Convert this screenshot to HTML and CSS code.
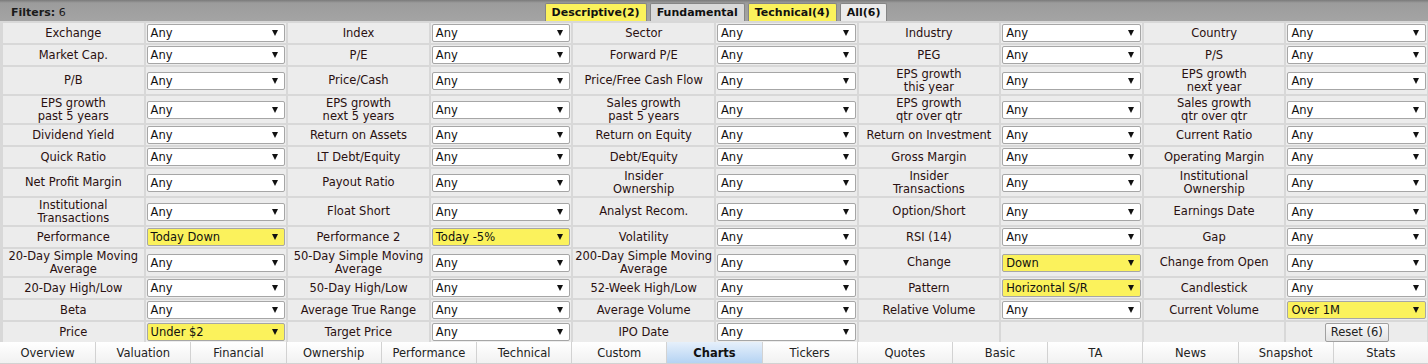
FILE: index.html
```html
<!DOCTYPE html>
<html lang="en">
<head>
    <meta charset="UTF-8">
    <title>Screener Filters</title>
    <link rel="stylesheet" href="styles.css">
</head>
<body>

<div class="panel">
    <div class="head">
        <div class="count"><b>Filters:</b> 6</div>
        <div class="groups">
            <span class="grp on">Descriptive(2)</span>
            <span class="grp">Fundamental</span>
            <span class="grp on">Technical(4)</span>
            <span class="grp cur">All(6)</span>
        </div>
        <div></div>
    </div>

    <div class="filters">
        <!-- row 1 -->
        <div class="lbl">Exchange</div><div class="cell"><div class="sel">Any</div></div>
        <div class="lbl">Index</div><div class="cell"><div class="sel">Any</div></div>
        <div class="lbl">Sector</div><div class="cell"><div class="sel">Any</div></div>
        <div class="lbl">Industry</div><div class="cell"><div class="sel">Any</div></div>
        <div class="lbl">Country</div><div class="cell"><div class="sel">Any</div></div>
        <!-- row 2 -->
        <div class="lbl">Market Cap.</div><div class="cell"><div class="sel">Any</div></div>
        <div class="lbl">P/E</div><div class="cell"><div class="sel">Any</div></div>
        <div class="lbl">Forward P/E</div><div class="cell"><div class="sel">Any</div></div>
        <div class="lbl">PEG</div><div class="cell"><div class="sel">Any</div></div>
        <div class="lbl">P/S</div><div class="cell"><div class="sel">Any</div></div>
        <!-- row 3 -->
        <div class="lbl">P/B</div><div class="cell"><div class="sel">Any</div></div>
        <div class="lbl">Price/Cash</div><div class="cell"><div class="sel">Any</div></div>
        <div class="lbl">Price/Free Cash Flow</div><div class="cell"><div class="sel">Any</div></div>
        <div class="lbl">EPS growth<br>this year</div><div class="cell"><div class="sel">Any</div></div>
        <div class="lbl">EPS growth<br>next year</div><div class="cell"><div class="sel">Any</div></div>
        <!-- row 4 -->
        <div class="lbl">EPS growth<br>past 5 years</div><div class="cell"><div class="sel">Any</div></div>
        <div class="lbl">EPS growth<br>next 5 years</div><div class="cell"><div class="sel">Any</div></div>
        <div class="lbl">Sales growth<br>past 5 years</div><div class="cell"><div class="sel">Any</div></div>
        <div class="lbl">EPS growth<br>qtr over qtr</div><div class="cell"><div class="sel">Any</div></div>
        <div class="lbl">Sales growth<br>qtr over qtr</div><div class="cell"><div class="sel">Any</div></div>
        <!-- row 5 -->
        <div class="lbl">Dividend Yield</div><div class="cell"><div class="sel">Any</div></div>
        <div class="lbl">Return on Assets</div><div class="cell"><div class="sel">Any</div></div>
        <div class="lbl">Return on Equity</div><div class="cell"><div class="sel">Any</div></div>
        <div class="lbl">Return on Investment</div><div class="cell"><div class="sel">Any</div></div>
        <div class="lbl">Current Ratio</div><div class="cell"><div class="sel">Any</div></div>
        <!-- row 6 -->
        <div class="lbl">Quick Ratio</div><div class="cell"><div class="sel">Any</div></div>
        <div class="lbl">LT Debt/Equity</div><div class="cell"><div class="sel">Any</div></div>
        <div class="lbl">Debt/Equity</div><div class="cell"><div class="sel">Any</div></div>
        <div class="lbl">Gross Margin</div><div class="cell"><div class="sel">Any</div></div>
        <div class="lbl">Operating Margin</div><div class="cell"><div class="sel">Any</div></div>
        <!-- row 7 -->
        <div class="lbl">Net Profit Margin</div><div class="cell"><div class="sel">Any</div></div>
        <div class="lbl">Payout Ratio</div><div class="cell"><div class="sel">Any</div></div>
        <div class="lbl">Insider<br>Ownership</div><div class="cell"><div class="sel">Any</div></div>
        <div class="lbl">Insider<br>Transactions</div><div class="cell"><div class="sel">Any</div></div>
        <div class="lbl">Institutional<br>Ownership</div><div class="cell"><div class="sel">Any</div></div>
        <!-- row 8 -->
        <div class="lbl">Institutional<br>Transactions</div><div class="cell"><div class="sel">Any</div></div>
        <div class="lbl">Float Short</div><div class="cell"><div class="sel">Any</div></div>
        <div class="lbl">Analyst Recom.</div><div class="cell"><div class="sel">Any</div></div>
        <div class="lbl">Option/Short</div><div class="cell"><div class="sel">Any</div></div>
        <div class="lbl">Earnings Date</div><div class="cell"><div class="sel">Any</div></div>
        <!-- row 9 -->
        <div class="lbl">Performance</div><div class="cell"><div class="sel set">Today Down</div></div>
        <div class="lbl">Performance 2</div><div class="cell"><div class="sel set">Today -5%</div></div>
        <div class="lbl">Volatility</div><div class="cell"><div class="sel">Any</div></div>
        <div class="lbl">RSI (14)</div><div class="cell"><div class="sel">Any</div></div>
        <div class="lbl">Gap</div><div class="cell"><div class="sel">Any</div></div>
        <!-- row 10 -->
        <div class="lbl">20-Day Simple Moving<br>Average</div><div class="cell"><div class="sel">Any</div></div>
        <div class="lbl">50-Day Simple Moving<br>Average</div><div class="cell"><div class="sel">Any</div></div>
        <div class="lbl">200-Day Simple Moving<br>Average</div><div class="cell"><div class="sel">Any</div></div>
        <div class="lbl">Change</div><div class="cell"><div class="sel set">Down</div></div>
        <div class="lbl">Change from Open</div><div class="cell"><div class="sel">Any</div></div>
        <!-- row 11 -->
        <div class="lbl">20-Day High/Low</div><div class="cell"><div class="sel">Any</div></div>
        <div class="lbl">50-Day High/Low</div><div class="cell"><div class="sel">Any</div></div>
        <div class="lbl">52-Week High/Low</div><div class="cell"><div class="sel">Any</div></div>
        <div class="lbl">Pattern</div><div class="cell"><div class="sel set">Horizontal S/R</div></div>
        <div class="lbl">Candlestick</div><div class="cell"><div class="sel">Any</div></div>
        <!-- row 12 -->
        <div class="lbl">Beta</div><div class="cell"><div class="sel">Any</div></div>
        <div class="lbl">Average True Range</div><div class="cell"><div class="sel">Any</div></div>
        <div class="lbl">Average Volume</div><div class="cell"><div class="sel">Any</div></div>
        <div class="lbl">Relative Volume</div><div class="cell"><div class="sel">Any</div></div>
        <div class="lbl">Current Volume</div><div class="cell"><div class="sel set">Over 1M</div></div>
        <!-- row 13 -->
        <div class="lbl">Price</div><div class="cell"><div class="sel set">Under $2</div></div>
        <div class="lbl">Target Price</div><div class="cell"><div class="sel">Any</div></div>
        <div class="lbl">IPO Date</div><div class="cell"><div class="sel">Any</div></div>
        <div class="lbl"></div><div class="cell"></div>
        <div class="lbl"></div><div class="cell center"><button class="reset">Reset (6)</button></div>
    </div>

    <div class="views">
        <span class="view">Overview</span>
        <span class="view">Valuation</span>
        <span class="view">Financial</span>
        <span class="view">Ownership</span>
        <span class="view">Performance</span>
        <span class="view">Technical</span>
        <span class="view">Custom</span>
        <span class="view active">Charts</span>
        <span class="view">Tickers</span>
        <span class="view">Quotes</span>
        <span class="view">Basic</span>
        <span class="view">TA</span>
        <span class="view">News</span>
        <span class="view">Snapshot</span>
        <span class="view">Stats</span>
    </div>
</div>

</body>
</html>
```

FILE: styles.css
```css
body {
    margin: 0;
    background-color: #fff;
    font-family: "DejaVu Sans", Verdana, sans-serif;
    font-size: 11.5px;
    color: #222;
}
.panel {
    width: 1428px;
}

/* top bar */
.head {
    height: 21px;
    display: grid;
    grid-template-columns: 1fr auto 1fr;
    align-items: end;
    background: linear-gradient(#7a7a7a 0, #9c9c9c 3px, #a4a4a4 100%);
}
.count {
    align-self: center;
    padding-left: 11px;
    padding-top: 3px;
    font-size: 11px;
    color: #1a1a1a;
}
.groups {
    display: flex;
    gap: 3px;
    padding-left: 4px;
}
.grp {
    height: 17px;
    line-height: 17px;
    padding: 0 6px;
    border: 1px solid #858585;
    border-bottom: none;
    border-radius: 2px 2px 0 0;
    background-color: #d9d9d9;
    font-size: 11px;
    font-weight: bold;
    color: #111;
}
.grp.on {
    background-color: #fbf25c;
}
.grp.cur {
    background-color: #ececec;
}

/* filter grid */
.filters {
    display: grid;
    grid-template-columns: repeat(10, 1fr);
    grid-template-rows: 20px 20px 27px 27px 20px 20px 27px 27px 20px 27px 20px 20px 20px;
    gap: 2px;
    padding: 2px 1px 0 3px;
    background-color: #d8d8d8;
}
.lbl {
    background-color: #ececec;
    display: flex;
    align-items: center;
    justify-content: center;
    text-align: center;
    line-height: 13px;
    white-space: nowrap;
    color: #2a1010;
}
.cell {
    background-color: #ececec;
    display: flex;
    align-items: center;
    padding: 0 1px;
}
.cell.center {
    justify-content: center;
}
.sel {
    flex: 1;
    height: 16px;
    display: flex;
    align-items: center;
    padding: 0 6px 0 3px;
    border: 1px solid #a6a6a6;
    border-radius: 2px;
    background-color: #fff;
    color: #111;
}
.sel::after {
    content: "";
    margin-left: auto;
    border-left: 3.5px solid transparent;
    border-right: 3.5px solid transparent;
    border-top: 6px solid #111;
}
.sel.set {
    background-color: #fbf25c;
}
.reset {
    height: 19px;
    padding: 0 5px;
    border: 1px solid #a0a0a0;
    border-radius: 2px;
    background: linear-gradient(#fafafa, #e2e2e2);
    font-family: "DejaVu Sans", Verdana, sans-serif;
    font-size: 11.5px;
    color: #222;
}

/* view tabs */
.views {
    display: grid;
    grid-template-columns: repeat(15, 1fr);
    height: 22px;
}
.view {
    display: flex;
    align-items: center;
    justify-content: center;
    border-left: 1px solid #d2d2d2;
    border-bottom: 1px solid #d2d2d2;
    background: linear-gradient(#ffffff, #f1f1f1);
    color: #222;
}
.view:first-child {
    border-left: none;
}
.view.active {
    background: linear-gradient(#e6f0fb, #b5d3f3);
    font-weight: bold;
    color: #111;
}
```
